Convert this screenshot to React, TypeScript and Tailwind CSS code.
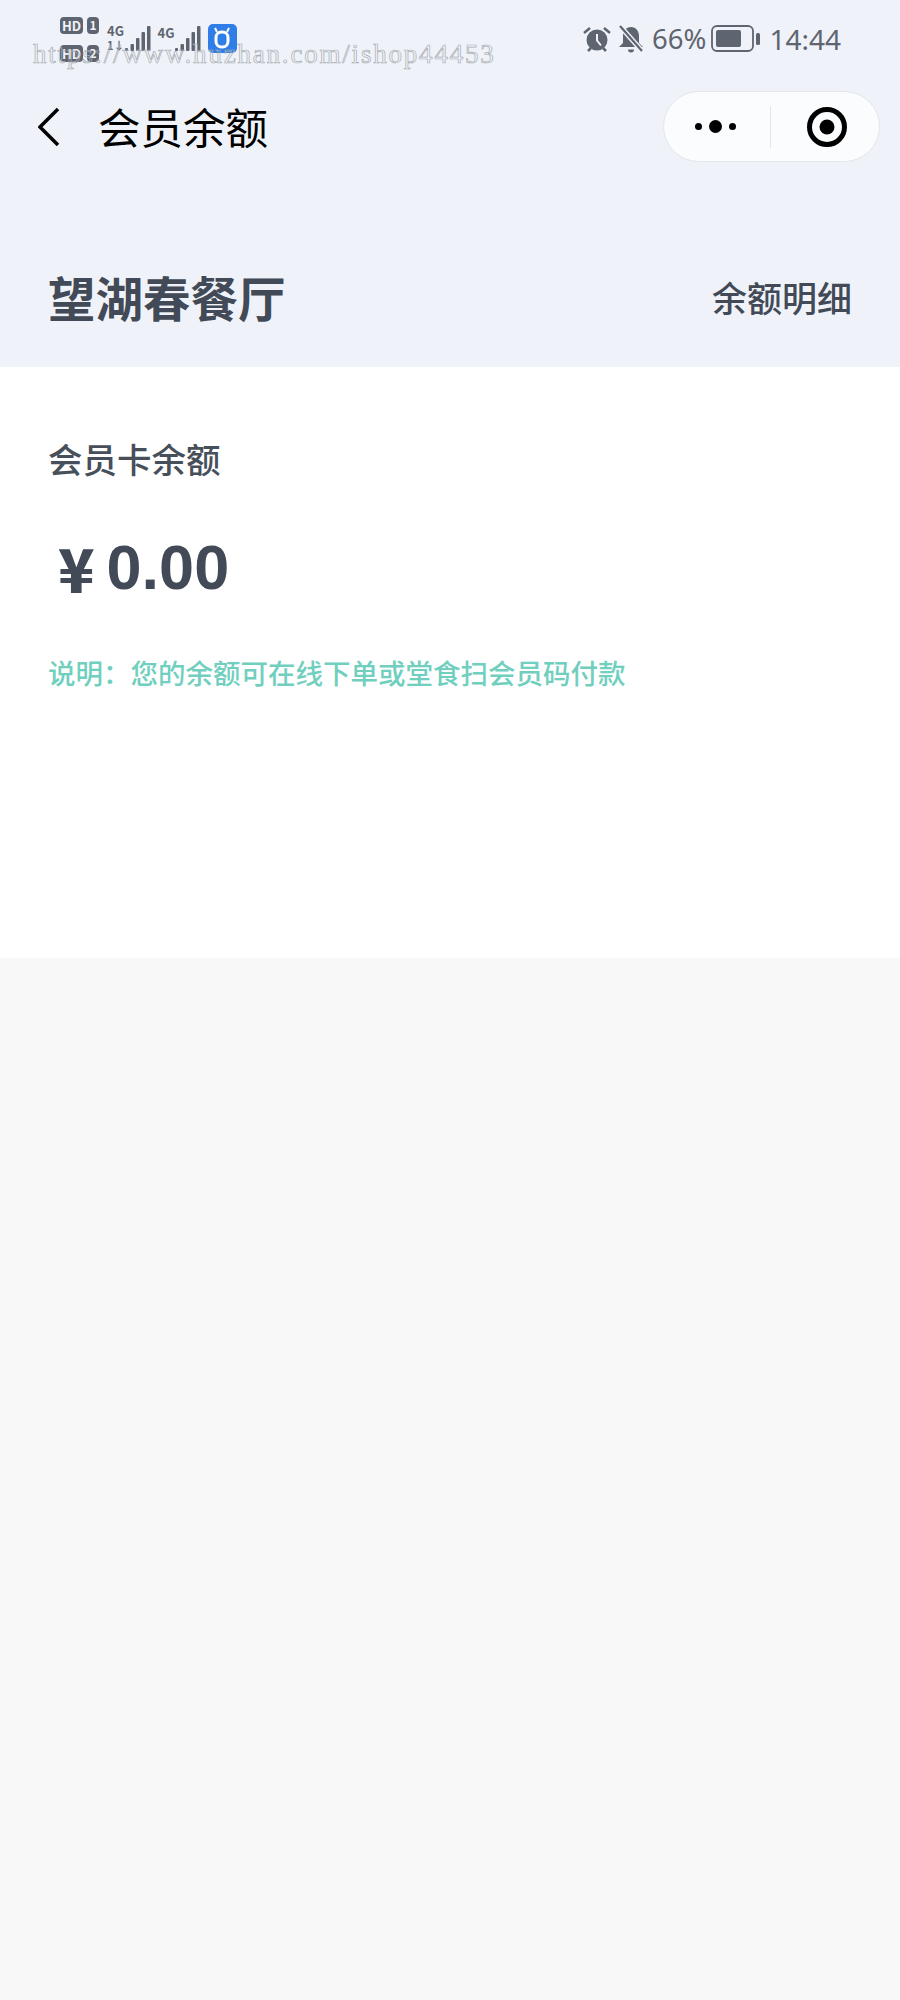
import React from "react";

const Bars = () => (
  <svg width="26" height="26" viewBox="0 0 26 26" fill="#5f6570">
    <rect x="0" y="22" width="3" height="3" rx="1" />
    <rect x="5.500" y="18" width="3.500" height="7" rx="1" />
    <rect x="11" y="12" width="3.500" height="13" rx="1" />
    <rect x="16.500" y="6" width="3.500" height="19" rx="1" />
    <rect x="22" y="0" width="3.500" height="25" rx="1" />
  </svg>
);

const HdRow = ({ n }: { n: string }) => (
  <div className="flex items-center gap-[4px]">
    <span className="flex h-[17px] w-[23px] items-center justify-center rounded-[4px] bg-[#5f6570] text-[13px] font-bold leading-none text-[#eff3f9]">HD</span>
    <span className="flex h-[17px] w-[12px] items-center justify-center rounded-[4px] bg-[#5f6570] text-[12px] font-bold leading-none text-[#eff3f9]">{n}</span>
  </div>
);

const Alarm = () => (
  <svg width="30" height="28" viewBox="0 0 30 28">
    <circle cx="15" cy="15" r="10.5" fill="#5f6570" />
    <path d="M15 9v6.5l4 5" fill="none" stroke="#eff3f9" strokeWidth="2" />
    <path d="M2 8l6-5M28 8l-6-5M6 26l3-3M24 26l-3-3" stroke="#5f6570" strokeWidth="2.5" fill="none" />
  </svg>
);

const BellOff = () => (
  <svg width="26" height="28" viewBox="0 0 26 28">
    <path d="M13 2c-5 0-8 4-8 9v7l-4 4h24l-4-4v-7c0-5-3-9-8-9z" fill="#5f6570" />
    <path d="M10 24.500a3 3 0 0 0 6 0z" fill="#5f6570" />
    <path d="M2 1l22 25" stroke="#eff3f9" strokeWidth="5" />
    <path d="M2 1l22 25" stroke="#5f6570" strokeWidth="2.200" />
  </svg>
);

const Battery = () => (
  <svg width="50" height="28" viewBox="0 0 50 28">
    <rect x="1" y="1" width="41" height="25" rx="5" fill="none" stroke="#5f6570" strokeWidth="1.800" />
    <rect x="5" y="5" width="25" height="17" rx="2" fill="#5f6570" />
    <rect x="45" y="8" width="4" height="12" rx="1.500" fill="#5f6570" />
  </svg>
);

export default function App() {
  return (
    <div className="relative h-[2000px] w-[900px] overflow-hidden bg-[#f8f8f9] font-['Noto_Sans_CJK_SC','Noto_Sans',sans-serif]">
      <header className="flex h-[367px] flex-col bg-[#eff3f9]">
        <div className="flex h-[80px] items-center justify-between pb-[2px] pl-[60px] pr-[59px]">
          <div className="flex items-start">
            <div className="flex flex-col gap-[11px]">
              <HdRow n="1" />
              <HdRow n="2" />
            </div>
            <div className="ml-[8px] mt-[7px] flex items-end">
              <div className="flex flex-col">
                <span className="text-[13px] font-bold leading-[14px] text-[#5f6570]">4G</span>
                <span className="text-[11px] font-bold leading-[14px] text-[#5f6570]">1↓</span>
              </div>
              <Bars />
              <div className="ml-[7px] flex h-[26px] flex-col">
                <span className="text-[13px] font-bold leading-[14px] text-[#5f6570]">4G</span>
              </div>
              <Bars />
            </div>
            <div className="ml-[7px] mt-[7px] flex h-[29px] w-[29px] items-center justify-center rounded-[5px] bg-[#2f7de6]">
              <svg width="20" height="22" viewBox="0 0 20 22" fill="none">
                <path d="M3 1l2 4M17 1l-2 4" stroke="#fff" strokeWidth="2" />
                <rect x="4" y="5" width="12" height="15" rx="5.500" stroke="#fff" strokeWidth="3" />
              </svg>
            </div>
          </div>
          <div className="flex items-center text-[#5f6570]">
            <Alarm />
            <span className="ml-[6px] flex"><BellOff /></span>
            <span className="ml-[8px] font-['Noto_Sans',sans-serif] text-[27.500px] leading-none">66%</span>
            <span className="ml-[5px] flex"><Battery /></span>
            <span className="ml-[8px] font-['Noto_Sans',sans-serif] text-[28px] leading-none">14:44</span>
          </div>
        </div>

        <div className="mt-[11px] flex h-[71px] items-center pl-[38px] pr-[20px]">
          <svg width="22" height="40" viewBox="0 0 22 40" fill="none">
            <path d="M20 2L2 20l18 18" stroke="#000" strokeWidth="3.500" />
          </svg>
          <h1 className="ml-[38px] text-[42.500px] font-normal leading-none text-black">会员余额</h1>
          <div className="ml-auto flex h-[71px] w-[217px] items-center rounded-full border border-[#e2e5ea] bg-[#fbfcfe]">
            <div className="flex w-[106px] items-center justify-center gap-[7px] pr-[4px]">
              <span className="h-[7px] w-[7px] rounded-full bg-black" />
              <span className="h-[13px] w-[13px] rounded-full bg-black" />
              <span className="h-[7px] w-[7px] rounded-full bg-black" />
            </div>
            <div className="h-[42px] w-px bg-[#e2e5ea]" />
            <div className="flex flex-1 items-center justify-center pl-[4px]">
              <svg width="42" height="42" viewBox="0 0 42 42" fill="none">
                <circle cx="21" cy="21" r="17.500" stroke="#000" strokeWidth="5" />
                <circle cx="21" cy="21" r="7.500" fill="#000" />
              </svg>
            </div>
          </div>
        </div>

        <div className="mt-[100px] flex items-center justify-between pl-[48px] pr-[48px]">
          <h2 className="text-[47.500px] font-bold leading-[70px] text-[#414a56]">望湖春餐厅</h2>
          <span className="text-[35px] font-medium leading-[50px] text-[#414a56]">余额明细</span>
        </div>
      </header>

      <section className="h-[591px] bg-white pl-[48px] pt-[68px]">
        <p className="text-[34.500px] font-medium leading-[46px] text-[#474f5a]">会员卡余额</p>
        <p className="mt-[46px] flex items-center pl-[10px] font-['Liberation_Sans',sans-serif] text-[63px] font-bold leading-[80px] text-[#414a56]">
          <span className="font-['Noto_Sans_CJK_SC',sans-serif] text-[60px] font-black leading-[80px]">¥</span>
          <span className="ml-[12px]">0.00</span>
        </p>
        <p className="mt-[45px] text-[27.500px] font-medium leading-[40px] text-[#70cfbe]">说明：您的余额可在线下单或堂食扫会员码付款</p>
      </section>

      <div className="absolute left-[33px] top-[36px] whitespace-nowrap font-['Liberation_Serif',serif] text-[27px] leading-[36px] tracking-[1.800px] text-transparent [-webkit-text-stroke:0.7px_#a9adb3]">
        https://www.huzhan.com/ishop44453
      </div>
    </div>
  );
}
